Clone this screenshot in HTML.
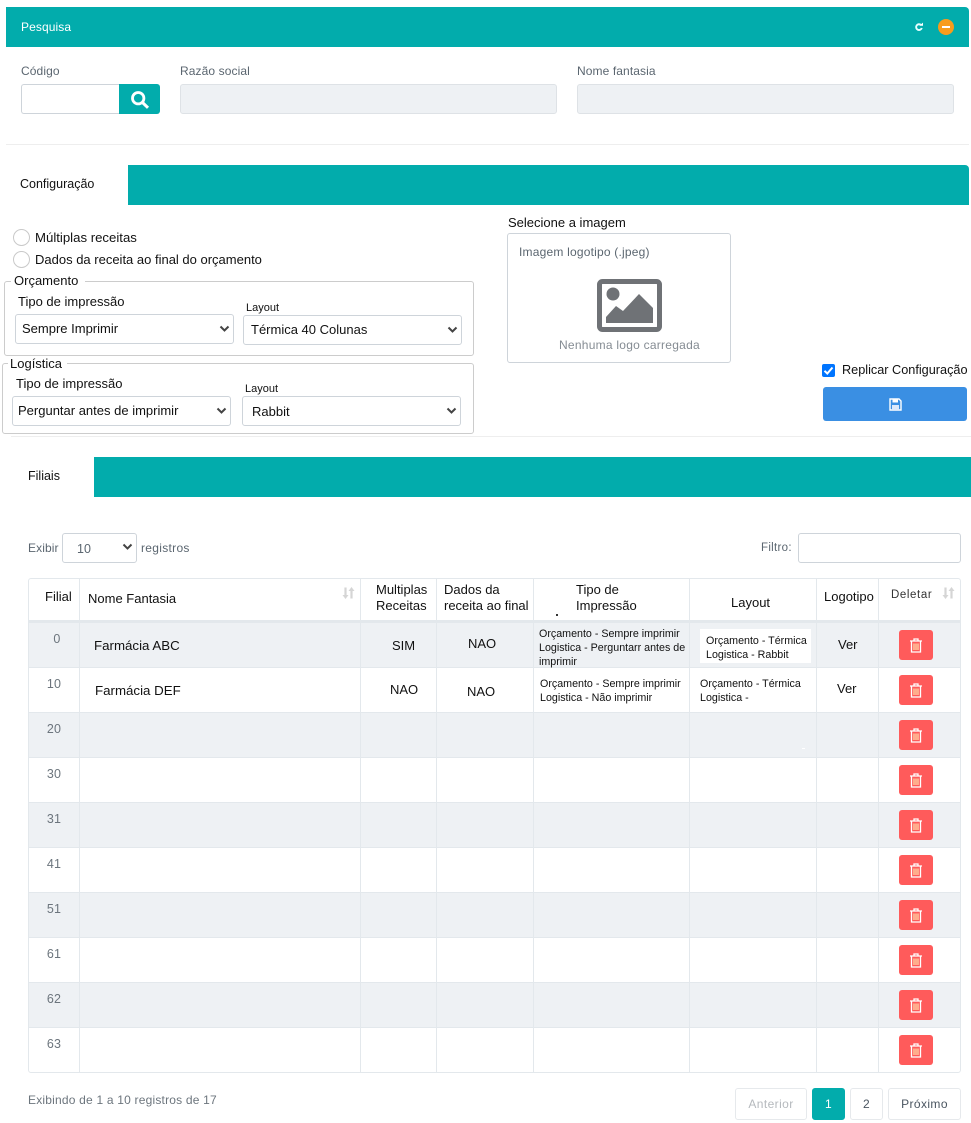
<!DOCTYPE html>
<html lang="pt"><head><meta charset="utf-8"><title>Configuração</title>
<style>
html,body{margin:0;padding:0;background:#fff}
#p{position:relative;width:971px;height:1123px;overflow:hidden;background:#fff;font-family:"Liberation Sans",sans-serif;color:#111;font-size:14px}
#p div,#p span,#p svg{position:absolute;box-sizing:border-box}
.t{white-space:nowrap;line-height:16px;height:16px}
.s{color:#5b6670;font-size:12px;letter-spacing:.1px}
.teal{background:#02acac}
.in{background:#fff;border:1px solid #ced4da;border-radius:3px}
.dis{background:#eef1f4;border:1px solid #dee2e6;border-radius:3px}
.g{background:#eef1f4;left:29px;width:931px;height:44px}
.h{background:#e3e8ec;left:29px;width:931px;height:1px}
.v{background:#e3e8ec;top:579px;width:1px;height:494px}
.n{color:#6c757d;font-size:12.5px;letter-spacing:.2px;text-align:center;width:30px}
.d{background:#ff5b5b;border-radius:3px;left:899px;width:34px;height:30px}
.x{font-size:10.7px;line-height:14px;height:14px}
.th{font-size:13px}
.pg{border:1px solid #e6e9ec;border-radius:3px;height:32px;top:1088px;text-align:center;line-height:30px;font-size:12px;letter-spacing:.4px;color:#4a5560}
</style></head><body>
<div id="p">
<div class="teal" style="left:6px;top:7px;width:963px;height:40px;border-top-right-radius:4px"></div>
<div class="t" style="left:21px;top:19px;color:#fff;font-size:12px;letter-spacing:.1px">Pesquisa</div>
<svg style="left:914px;top:22px" width="10" height="10" viewBox="0 0 10 10"><path d="M7 3A2.9 2.900 0 1 0 7.800 6" fill="none" stroke="#e6ffff" stroke-width="1.900"/><path d="M5.200 3.800H9V.6z" fill="#fff"/></svg>
<div style="left:938px;top:19px;width:16px;height:16px;border-radius:50%;background:#f89c1c"></div>
<div style="left:942px;top:26px;width:8px;height:2px;background:#fff"></div>

<div class="t s" style="left:21px;top:63px">Código</div>
<div class="t s" style="left:180px;top:63px">Razão social</div>
<div class="t s" style="left:577px;top:63px">Nome fantasia</div>
<div class="in" style="left:21px;top:84px;width:99px;height:30px;border-right:0;border-radius:3px 0 0 3px"></div>
<div class="teal" style="left:119px;top:84px;width:41px;height:30px;border-radius:0 3px 3px 0"></div>
<svg style="left:130px;top:90px" width="20" height="19" viewBox="0 0 20 19"><circle cx="8.200" cy="8.200" r="5.700" fill="none" stroke="#fff" stroke-width="2.800"/><path d="M12.500 12.500 18 17.800" stroke="#fff" stroke-width="3" fill="none"/></svg>
<div class="dis" style="left:180px;top:84px;width:377px;height:30px"></div>
<div class="dis" style="left:577px;top:84px;width:377px;height:30px"></div>
<div style="left:6px;top:144px;width:963px;height:1px;background:#eee"></div>

<div class="teal" style="left:128px;top:165px;width:841px;height:40px;border-top-right-radius:4px"></div>
<div class="t" style="left:20px;top:176px;font-size:12.5px">Configuração</div>

<div style="left:13px;top:229px;width:17px;height:17px;border:1px solid #c9c9c9;border-radius:50%"></div>
<div style="left:13px;top:251px;width:17px;height:17px;border:1px solid #c9c9c9;border-radius:50%"></div>
<div class="t" style="left:35px;top:230px;font-size:13.2px">Múltiplas receitas</div>
<div class="t" style="left:35px;top:252px;font-size:13px">Dados da receita ao final do orçamento</div>

<div style="left:4px;top:281px;width:470px;height:75px;border:1px solid #ccc;border-radius:3px"></div>
<div class="t" style="left:11px;top:273px;background:#fff;padding:0 7px 0 3px;font-size:13px">Orçamento</div>
<div class="t" style="left:18px;top:294px;font-size:13px">Tipo de impressão</div>
<div class="t" style="left:246px;top:300px;font-size:11px">Layout</div>
<div class="in" style="left:15px;top:314px;width:219px;height:30px"></div>
<div class="t" style="left:22px;top:321px;font-size:13px">Sempre Imprimir</div>
<svg style="left:219px;top:325px" width="11" height="8" viewBox="0 0 11 8"><path d="M1.500 1.500 5.500 5.500 9.500 1.500" fill="none" stroke="#444" stroke-width="2"/></svg>
<div class="in" style="left:243px;top:315px;width:219px;height:30px"></div>
<div class="t" style="left:251px;top:322px;font-size:13px">Térmica 40 Colunas</div>
<svg style="left:447px;top:326px" width="11" height="8" viewBox="0 0 11 8"><path d="M1.500 1.500 5.500 5.500 9.500 1.500" fill="none" stroke="#444" stroke-width="2"/></svg>

<div style="left:2px;top:363px;width:472px;height:71px;border:1px solid #ccc;border-radius:3px"></div>
<div class="t" style="left:8px;top:356px;background:#fff;padding:0 5px 0 2px;font-size:13px">Logística</div>
<div class="t" style="left:16px;top:376px;font-size:13px">Tipo de impressão</div>
<div class="t" style="left:245px;top:381px;font-size:11px">Layout</div>
<div class="in" style="left:12px;top:396px;width:219px;height:30px"></div>
<div class="t" style="left:18px;top:403px;font-size:13px">Perguntar antes de imprimir</div>
<svg style="left:216px;top:407px" width="11" height="8" viewBox="0 0 11 8"><path d="M1.500 1.500 5.500 5.500 9.500 1.500" fill="none" stroke="#444" stroke-width="2"/></svg>
<div class="in" style="left:242px;top:396px;width:219px;height:30px"></div>
<div class="t" style="left:252px;top:404px;font-size:13px">Rabbit</div>
<svg style="left:446px;top:407px" width="11" height="8" viewBox="0 0 11 8"><path d="M1.500 1.500 5.500 5.500 9.500 1.500" fill="none" stroke="#444" stroke-width="2"/></svg>

<div class="t" style="left:508px;top:215px;font-size:13px">Selecione a imagem</div>
<div style="left:507px;top:233px;width:224px;height:130px;border:1px solid #ced4da;border-radius:3px"></div>
<div class="t s" style="left:519px;top:244px;font-size:12px;letter-spacing:.2px">Imagem logotipo (.jpeg)</div>
<svg style="left:597px;top:279px" width="66" height="53" viewBox="0 0 66 53"><rect x="2.500" y="2.500" width="60" height="48" rx="3" fill="#fff" stroke="#6f7276" stroke-width="5"/><circle cx="16" cy="15" r="6.500" fill="#6f7276"/><path d="M9 44V38L19 27 26 32 42 15 56 29V44z" fill="#6f7276"/></svg>
<div class="t s" style="left:559px;top:337px;font-size:12px;letter-spacing:.25px;color:#858c93">Nenhuma logo carregada</div>

<svg style="left:822px;top:364px" width="13" height="13" viewBox="0 0 13 13"><rect width="13" height="13" rx="2" fill="#0075ff"/><path d="M2.500 6.800 5.300 9.500 10.500 3.500" fill="none" stroke="#fff" stroke-width="2"/></svg>
<div class="t" style="left:842px;top:362px;font-size:12.7px">Replicar Configuração</div>
<div style="left:823px;top:387px;width:144px;height:34px;background:#3a8fe3;border-radius:3px"></div>
<svg style="left:889px;top:398px" width="13" height="13" viewBox="0 0 13 13"><path d="M1 1H10L12 3V12H1z" fill="none" stroke="#fff" stroke-width="1.400"/><rect x="3.500" y="1" width="5.500" height="3.500" fill="#fff"/><rect x="3" y="7" width="7" height="5" fill="#dbe9fb"/></svg>
<div style="left:11px;top:436px;width:960px;height:1px;background:#eee"></div>

<div class="teal" style="left:94px;top:457px;width:877px;height:40px"></div>
<div class="t" style="left:28px;top:468px;font-size:12.5px">Filiais</div>

<div class="t s" style="left:28px;top:540px;font-size:12px">Exibir</div>
<div class="in" style="left:62px;top:533px;width:75px;height:30px"></div>
<div class="t s" style="left:77px;top:541px;font-size:12.5px">10</div>
<svg style="left:122px;top:543px" width="11" height="8" viewBox="0 0 11 8"><path d="M1.500 1.500 5.500 5.500 9.500 1.500" fill="none" stroke="#444" stroke-width="2"/></svg>
<div class="t s" style="left:141px;top:540px;font-size:12px;letter-spacing:.3px">registros</div>
<div class="t s" style="left:761px;top:540px;font-size:11.5px;letter-spacing:.3px">Filtro:</div>
<div class="in" style="left:798px;top:533px;width:163px;height:30px"></div>

<div class="g" style="top:623px"></div>
<div class="g" style="top:713px"></div>
<div class="g" style="top:803px"></div>
<div class="g" style="top:893px"></div>
<div class="g" style="top:983px"></div>
<div style="left:29px;top:620px;width:931px;height:3px;background:#e3e8ec"></div>
<div class="h" style="top:667px"></div><div class="h" style="top:712px"></div><div class="h" style="top:757px"></div><div class="h" style="top:802px"></div><div class="h" style="top:847px"></div><div class="h" style="top:892px"></div><div class="h" style="top:937px"></div><div class="h" style="top:982px"></div><div class="h" style="top:1027px"></div>
<div class="v" style="left:79px"></div><div class="v" style="left:360px"></div><div class="v" style="left:436px"></div><div class="v" style="left:533px"></div><div class="v" style="left:689px"></div><div class="v" style="left:816px"></div><div class="v" style="left:878px"></div>
<div style="left:28px;top:578px;width:933px;height:495px;border:1px solid #e3e8ec;border-radius:3px"></div>

<div class="t th" style="left:45px;top:589px">Filial</div>
<div class="t th" style="left:88px;top:591px">Nome Fantasia</div>
<div class="t th" style="left:376px;top:582px">Multiplas</div>
<div class="t th" style="left:376px;top:598px">Receitas</div>
<div class="t th" style="left:444px;top:582px">Dados da</div>
<div class="t th" style="left:444px;top:598px">receita ao final</div>
<div class="t th" style="left:576px;top:582px">Tipo de</div>
<div class="t th" style="left:576px;top:598px">Impressão</div>
<div class="t th" style="left:731px;top:595px">Layout</div>
<div class="t th" style="left:824px;top:589px">Logotipo</div>
<div class="t" style="left:891px;top:587px;font-size:11.5px;letter-spacing:.6px;color:#333">Deletar</div>
<div style="left:556px;top:614px;width:2px;height:2px;background:#333"></div>
<svg style="left:342px;top:587px" width="13" height="12" viewBox="0 0 13 12"><path d="M3.500 0.500V8M9.500 4V11.500" fill="none" stroke="#d5d5d5" stroke-width="2.200"/><path d="M.5 8H6.500L3.500 12zM6.500 4H12.500L9.500 0z" fill="#d5d5d5"/></svg>
<svg style="left:942px;top:587px" width="13" height="12" viewBox="0 0 13 12"><path d="M3.500 0.500V8M9.500 4V11.500" fill="none" stroke="#d5d5d5" stroke-width="2.200"/><path d="M.5 8H6.500L3.500 12zM6.500 4H12.500L9.500 0z" fill="#d5d5d5"/></svg>

<div class="t n" style="left:42px;top:631px">0</div>
<div class="t n" style="left:39px;top:676px">10</div>
<div class="t n" style="left:39px;top:721px">20</div>
<div class="t n" style="left:39px;top:766px">30</div>
<div class="t n" style="left:39px;top:811px">31</div>
<div class="t n" style="left:39px;top:856px">41</div>
<div class="t n" style="left:39px;top:901px">51</div>
<div class="t n" style="left:39px;top:946px">61</div>
<div class="t n" style="left:39px;top:991px">62</div>
<div class="t n" style="left:39px;top:1036px">63</div>

<div class="t" style="left:94px;top:638px;font-size:13.3px">Farmácia ABC</div>
<div class="t" style="left:95px;top:683px;font-size:13.3px">Farmácia DEF</div>
<div class="t" style="left:392px;top:638px;font-size:13px">SIM</div>
<div class="t" style="left:390px;top:682px;font-size:13px">NAO</div>
<div class="t" style="left:468px;top:636px;font-size:13px">NAO</div>
<div class="t" style="left:467px;top:684px;font-size:13px">NAO</div>

<div class="t x" style="left:539px;top:627px">Orçamento - Sempre imprimir</div>
<div class="t x" style="left:539px;top:641px">Logistica - Perguntarr antes de</div>
<div class="t x" style="left:539px;top:655px">imprimir</div>
<div class="t x" style="left:540px;top:677px">Orçamento - Sempre imprimir</div>
<div class="t x" style="left:540px;top:691px">Logistica - Não imprimir</div>
<div style="left:700px;top:629px;width:111px;height:34px;background:#fff"></div>
<div class="t x" style="left:706px;top:634px">Orçamento - Térmica</div>
<div class="t x" style="left:706px;top:648px">Logistica - Rabbit</div>
<div class="t x" style="left:700px;top:677px">Orçamento - Térmica</div>
<div class="t x" style="left:700px;top:691px">Logistica -</div>
<div class="t" style="left:838px;top:637px;font-size:13px">Ver</div>
<div class="t" style="left:837px;top:681px;font-size:13px">Ver</div>
<div style="left:802px;top:748px;width:3px;height:1px;background:#fff"></div>

<div class="d" style="top:630px"></div><div class="d" style="top:675px"></div><div class="d" style="top:720px"></div><div class="d" style="top:765px"></div><div class="d" style="top:810px"></div><div class="d" style="top:855px"></div><div class="d" style="top:900px"></div><div class="d" style="top:945px"></div><div class="d" style="top:990px"></div><div class="d" style="top:1035px"></div>
<svg style="left:909px;top:638px" width="14" height="15" viewBox="0 0 14 15"><path d="M1 3H13M5 3V1H9V3M2.500 3V14H11.500V3" fill="none" stroke="#fff" stroke-width="1.300"/><path d="M5 5.500V12M7 5.500V12M9 5.500V12" stroke="#ffd9a8" stroke-width="1.300"/></svg>
<svg style="left:909px;top:683px" width="14" height="15" viewBox="0 0 14 15"><path d="M1 3H13M5 3V1H9V3M2.500 3V14H11.500V3" fill="none" stroke="#fff" stroke-width="1.300"/><path d="M5 5.500V12M7 5.500V12M9 5.500V12" stroke="#ffd9a8" stroke-width="1.300"/></svg>
<svg style="left:909px;top:728px" width="14" height="15" viewBox="0 0 14 15"><path d="M1 3H13M5 3V1H9V3M2.500 3V14H11.500V3" fill="none" stroke="#fff" stroke-width="1.300"/><path d="M5 5.500V12M7 5.500V12M9 5.500V12" stroke="#ffd9a8" stroke-width="1.300"/></svg>
<svg style="left:909px;top:773px" width="14" height="15" viewBox="0 0 14 15"><path d="M1 3H13M5 3V1H9V3M2.500 3V14H11.500V3" fill="none" stroke="#fff" stroke-width="1.300"/><path d="M5 5.500V12M7 5.500V12M9 5.500V12" stroke="#ffd9a8" stroke-width="1.300"/></svg>
<svg style="left:909px;top:818px" width="14" height="15" viewBox="0 0 14 15"><path d="M1 3H13M5 3V1H9V3M2.500 3V14H11.500V3" fill="none" stroke="#fff" stroke-width="1.300"/><path d="M5 5.500V12M7 5.500V12M9 5.500V12" stroke="#ffd9a8" stroke-width="1.300"/></svg>
<svg style="left:909px;top:863px" width="14" height="15" viewBox="0 0 14 15"><path d="M1 3H13M5 3V1H9V3M2.500 3V14H11.500V3" fill="none" stroke="#fff" stroke-width="1.300"/><path d="M5 5.500V12M7 5.500V12M9 5.500V12" stroke="#ffd9a8" stroke-width="1.300"/></svg>
<svg style="left:909px;top:908px" width="14" height="15" viewBox="0 0 14 15"><path d="M1 3H13M5 3V1H9V3M2.500 3V14H11.500V3" fill="none" stroke="#fff" stroke-width="1.300"/><path d="M5 5.500V12M7 5.500V12M9 5.500V12" stroke="#ffd9a8" stroke-width="1.300"/></svg>
<svg style="left:909px;top:953px" width="14" height="15" viewBox="0 0 14 15"><path d="M1 3H13M5 3V1H9V3M2.500 3V14H11.500V3" fill="none" stroke="#fff" stroke-width="1.300"/><path d="M5 5.500V12M7 5.500V12M9 5.500V12" stroke="#ffd9a8" stroke-width="1.300"/></svg>
<svg style="left:909px;top:998px" width="14" height="15" viewBox="0 0 14 15"><path d="M1 3H13M5 3V1H9V3M2.500 3V14H11.500V3" fill="none" stroke="#fff" stroke-width="1.300"/><path d="M5 5.500V12M7 5.500V12M9 5.500V12" stroke="#ffd9a8" stroke-width="1.300"/></svg>
<svg style="left:909px;top:1043px" width="14" height="15" viewBox="0 0 14 15"><path d="M1 3H13M5 3V1H9V3M2.500 3V14H11.500V3" fill="none" stroke="#fff" stroke-width="1.300"/><path d="M5 5.500V12M7 5.500V12M9 5.500V12" stroke="#ffd9a8" stroke-width="1.300"/></svg>

<div class="t s" style="left:28px;top:1092px;font-size:12px;letter-spacing:.2px;color:#6c757d">Exibindo de 1 a 10 registros de 17</div>
<div class="pg" style="left:735px;width:72px;color:#b5b9bd">Anterior</div>
<div class="pg teal" style="left:812px;width:33px;border-color:#02acac;color:#fff">1</div>
<div class="pg" style="left:850px;width:33px">2</div>
<div class="pg" style="left:888px;width:73px">Próximo</div>
</div>
</body></html>
